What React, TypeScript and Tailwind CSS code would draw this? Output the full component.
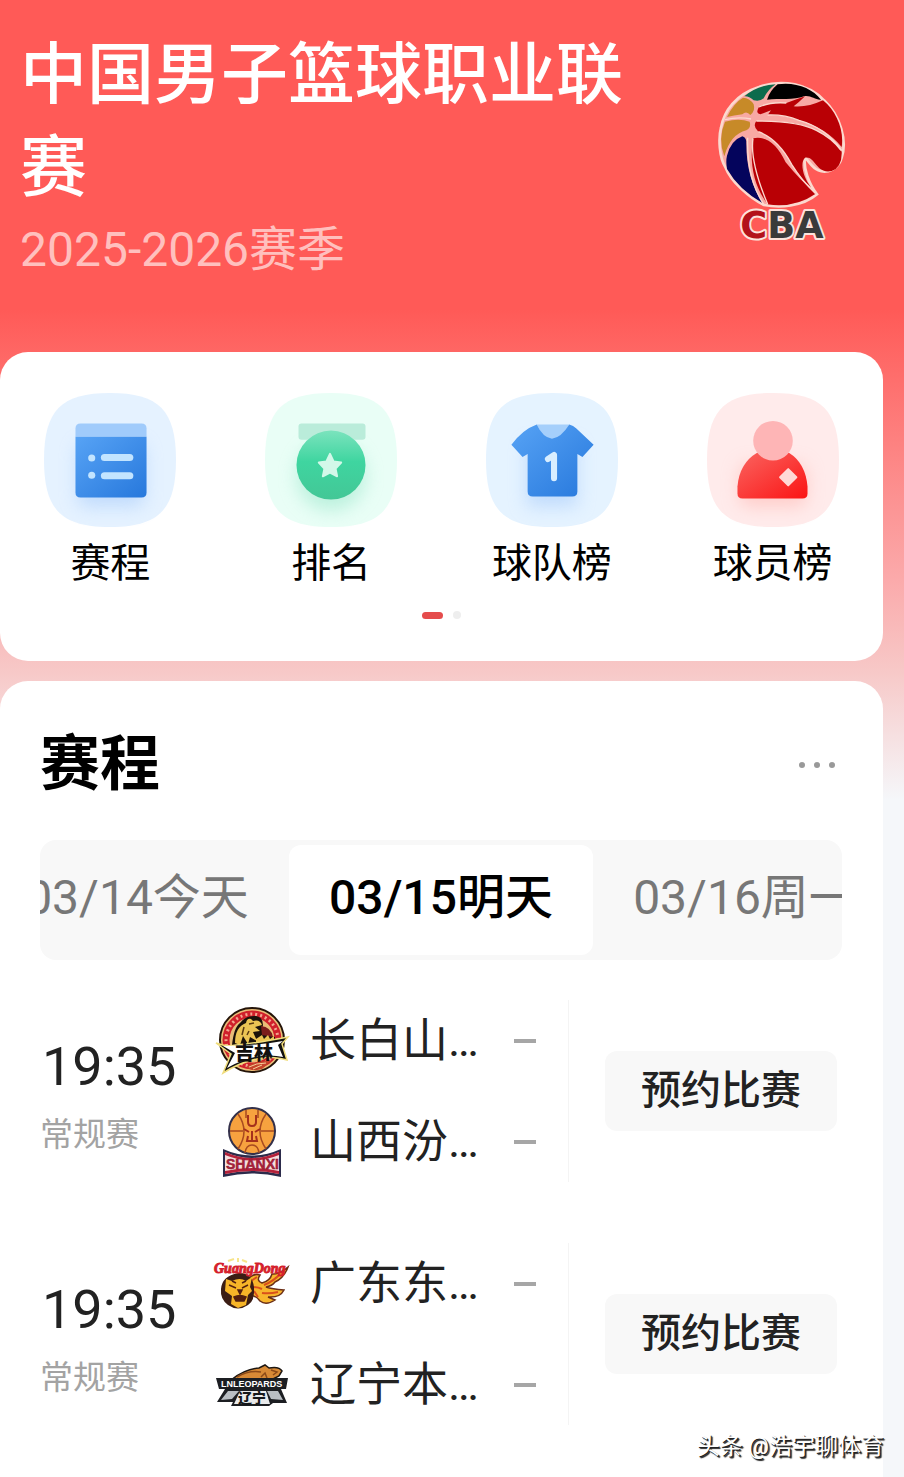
import React from "react";

type Game = { time: string; stage: string; teams: { name: string; logo: React.ReactNode }[] };

function CbaLogo() {
  return (
    <svg viewBox="54 54 390 486" className="h-[162px] w-[130px] overflow-visible" role="img" aria-label="CBA">
      <path
        d="M180 78C250 52 330 70 375 118C425 165 445 240 428 290C420 322 385 340 358 328C338 320 330 300 318 290C312 320 330 370 354 400C310 438 240 440 195 432C150 410 95 360 80 320C60 290 58 230 66 200C75 150 110 100 180 78Z"
        fill="#f8a9a4"
        stroke="#fbd9cf"
        strokeWidth="8"
      />
      <path d="M136 106Q175 72 230 70Q208 84 194 112Q184 122 164 118Q148 104 136 106Z" fill="#0c6b4c" />
      <path d="M236 70C290 62 340 82 366 116C350 118 335 102 315 106C285 118 240 112 204 116Q212 90 236 70Z" fill="#000" />
      <path d="M84 168Q104 126 132 110Q152 110 164 130Q170 150 154 162Q142 148 130 160Q104 164 84 168Z" fill="#c78a28" />
      <path d="M78 182Q120 170 152 182Q158 198 142 208Q94 220 76 286Q56 232 78 182Z" fill="#c78a28" />
      <path d="M84 284Q96 238 130 226Q144 230 142 250Q142 350 190 426Q118 384 84 324Q80 300 84 284Z" fill="#04045c" />
      <path
        d="M180 138Q215 122 262 126Q290 116 318 106Q300 124 284 136Q325 140 372 118C412 150 436 208 428 258Q380 200 300 178Q255 160 206 162L216 148L184 160Q168 156 180 138Z"
        fill="#b90005"
      />
      <path
        d="M172 180Q300 180 352 208Q400 232 428 272Q430 318 398 330C350 340 350 284 318 290C302 304 312 350 336 378Q306 356 278 310Q238 234 178 212Q160 196 172 180Z"
        fill="#b90005"
      />
      <path d="M162 232Q220 220 260 304Q304 358 350 398Q286 442 206 430C160 368 152 300 162 232Z" fill="#b90005" />
      <path
        d="M180 138Q215 122 262 126M206 162Q255 160 300 178Q380 200 428 268M172 180Q300 180 352 208Q400 232 426 268M178 212Q238 234 278 310Q306 356 350 398M162 232Q152 300 206 430M146 230Q142 350 194 430M78 176Q120 166 156 174"
        fill="none"
        stroke="#fbd9cf"
        strokeWidth="4"
      />
      <text
        x="124"
        y="532"
        fontFamily="DejaVu Sans"
        fontWeight="700"
        fontSize="110"
        stroke="#fbe3dc"
        strokeWidth="12"
        strokeLinejoin="round"
        paintOrder="stroke"
        fill="#3a3a3a"
      >
        <tspan fill="#b3121a">C</tspan>BA
      </text>
    </svg>
  );
}

function ScheduleIcon() {
  return (
    <svg viewBox="0 0 130 132" className="h-[134px] w-[132px]" aria-hidden="true">
      <defs>
        <linearGradient id="sch" x1="0" y1="0" x2="1" y2="1">
          <stop offset="0" stopColor="#57a3f5" />
          <stop offset="1" stopColor="#2778dc" />
        </linearGradient>
        <filter id="soft" x="-50%" y="-50%" width="200%" height="200%">
          <feGaussianBlur stdDeviation="9" />
        </filter>
      </defs>
      <path d="M65 0C113 0 130 17 130 66S113 132 65 132S0 115 0 66S17 0 65 0Z" fill="#e5f2ff" />
      <rect x="33" y="50" width="66" height="62" rx="8" fill="#a9ccfb" opacity=".6" filter="url(#soft)" />
      <path d="M31 43V35Q31 30 36 30H96Q101 30 101 35V43Z" fill="#a0cbfb" />
      <path d="M31 43H101V98Q101 103 96 103H36Q31 103 31 98Z" fill="url(#sch)" />
      <g fill="#c2e4ff">
        <circle cx="47" cy="64" r="3.500" />
        <circle cx="47" cy="81" r="3.500" />
        <rect x="56" y="60" width="32" height="7" rx="3.500" />
        <rect x="56" y="78" width="32" height="7" rx="3.500" />
      </g>
    </svg>
  );
}

function RankIcon() {
  return (
    <svg viewBox="0 0 130 132" className="h-[134px] w-[132px]" aria-hidden="true">
      <defs>
        <linearGradient id="rank" x1="0" y1="0" x2="0" y2="1">
          <stop offset="0" stopColor="#7be3bd" />
          <stop offset=".45" stopColor="#3fd5a0" />
          <stop offset="1" stopColor="#43c796" />
        </linearGradient>
      </defs>
      <path d="M65 0C113 0 130 17 130 66S113 132 65 132S0 115 0 66S17 0 65 0Z" fill="#e9fef6" />
      <circle cx="65" cy="82" r="34" fill="#9fe8cd" opacity=".6" filter="url(#soft)" />
      <rect x="33" y="30" width="66" height="16" rx="3" fill="#baecda" />
      <circle cx="65" cy="71" r="34" fill="url(#rank)" />
      <path
        d="M64 60L67.500 67.500L75 68.500L69.500 74.500L71 82L64 78.500L57 82L58.500 74.500L53 68.500L60.500 67.500Z"
        fill="#d3f8e9"
        stroke="#d3f8e9"
        strokeWidth="2"
        strokeLinejoin="round"
      />
    </svg>
  );
}

function TeamIcon() {
  return (
    <svg viewBox="0 0 130 132" className="h-[134px] w-[132px]" aria-hidden="true">
      <path d="M65 0C113 0 130 17 130 66S113 132 65 132S0 115 0 66S17 0 65 0Z" fill="#e5f3ff" />
      <path d="M40 50H90V112H40Z" fill="#a9ccfb" opacity=".6" filter="url(#soft)" />
      <path d="M50 31H82L72 48H59Z" fill="#a5cffb" />
      <path
        d="M50 31Q56 44 65 45Q74 44 82 31Q86 32 89 35L106 51L95 63L90 60V97Q90 102 85 102H46Q41 102 41 97V60L36 63L25 51Q36 36 50 31Z"
        fill="url(#sch)"
      />
      <path d="M61 65L67 61V84" fill="none" stroke="#d9eeff" strokeWidth="6" strokeLinecap="round" strokeLinejoin="round" />
    </svg>
  );
}

function PlayerIcon() {
  return (
    <svg viewBox="0 0 130 132" className="h-[134px] w-[132px]" aria-hidden="true">
      <defs>
        <linearGradient id="ply" x1="0" y1="0" x2="1" y2="1">
          <stop offset="0" stopColor="#fa6460" />
          <stop offset="1" stopColor="#fb1414" />
        </linearGradient>
      </defs>
      <path d="M65 0C113 0 130 17 130 66S113 132 65 132S0 115 0 66S17 0 65 0Z" fill="#ffebeb" />
      <rect x="32" y="70" width="66" height="42" rx="8" fill="#ffb9b4" opacity=".6" filter="url(#soft)" />
      <path d="M49 59H81Q97 69 99 92V99Q99 104 94 104H35Q30 104 30 99V92Q32 69 49 59Z" fill="url(#ply)" />
      <circle cx="65" cy="47" r="19.500" fill="#feb5b6" />
      <path d="M80 75L88 83L80 91L72 83Z" fill="#ffd9d6" stroke="#ffd9d6" strokeWidth="2" strokeLinejoin="round" />
    </svg>
  );
}

function JilinLogo() {
  return (
    <svg viewBox="0 0 72 68" className="h-[68px] w-[72px] overflow-visible" role="img" aria-label="吉林">
      <circle cx="36" cy="33" r="32" fill="#e9bd78" stroke="#241409" strokeWidth="2" />
      <circle cx="36" cy="33" r="26" fill="none" stroke="#d0202b" strokeWidth="7" />
      <circle cx="36" cy="33" r="26" fill="none" stroke="#f3a58d" strokeWidth="3" strokeDasharray="2 3" />
      <path d="M16 38Q18 20 24 16Q30 8 40 9Q47 10 47 18L46 22L52 28L59 30V38Z" fill="#1b120a" />
      <path d="M19 36Q19 20 30 16Q31 11 35 12L37 14Q44 12 46 18L39 20L44 24L37 25L41 34L34 30L32 37L27 29L24 38Z" fill="#ecc554" />
      <path d="M33 17L38 16M28 20L26 28M33 24L31 28" stroke="#5a3a10" strokeWidth="1.500" />
      <path d="M45 19Q55 20 57 30L46 28Z" fill="#7b1c1b" />
      <path d="M40 32L46 28L48 32L52 28L54 32L58 29L58 35H40Z" fill="#ecc554" />
      <path d="M0 36Q10 40 20 38Q42 36 72 30L66 37L71 53Q54 49 46 51Q26 54 7 66L15 47Z" fill="#12110f" stroke="#f0dd7c" strokeWidth="1.500" />
      <path d="M7 39Q40 39 67 34L62 38L67 50Q42 44 11 61L19 46Z" fill="#fff" />
      <text x="19" y="53" fontFamily="Noto Sans CJK SC" fontWeight="900" fontSize="19" fill="#12110f">吉林</text>
      <path d="M30 60Q40 53 55 54L46 62Q36 65 30 60Z" fill="#c4442b" />
      <path d="M33 60Q40 56 50 56M37 62L46 58" stroke="#f6cf9a" strokeWidth="1" fill="none" />
    </svg>
  );
}

function ShanxiLogo() {
  return (
    <svg viewBox="0 0 72 70" className="h-[70px] w-[72px] overflow-visible" role="img" aria-label="SHANXI">
      <circle cx="36" cy="24" r="23" fill="#f7a23f" stroke="#33304a" strokeWidth="2" />
      <g fill="none" stroke="#a84b20" strokeWidth="1.500">
        <path d="M14 24H27M45 24H58M22 7Q34 24 22 42M50 7Q38 24 50 42M30 3V11M42 3V11M29 46Q30 38 36 38Q42 38 43 46" />
      </g>
      <path
        d="M32 8V15Q32 19 36 19Q40 19 40 15V8M28 22L33 25M44 22L39 25M36 24V34M32 29L31 34H41L40 29"
        stroke="#a5301c"
        strokeWidth="2"
        fill="none"
      />
      <path d="M7 42Q36 55 65 42V70Q36 63 7 70Z" fill="#2c2b4b" />
      <path d="M9 45Q36 57 63 45V67Q36 61 9 67Z" fill="#f6dede" />
      <path d="M9 45Q36 57 63 45V48Q36 59 9 48ZM9 64Q36 58 63 64V67Q36 61 9 67Z" fill="#b4213a" />
      <text x="10" y="62" fontFamily="Liberation Sans" fontWeight="700" fontSize="14" fill="#b4213a" stroke="#7f1c33" strokeWidth=".5">SHANXI</text>
    </svg>
  );
}

function GuangdongLogo() {
  return (
    <svg viewBox="0 0 76 54" className="h-[54px] w-[76px] overflow-visible" role="img" aria-label="GuangDong">
      <path d="M14 4L20 2M24 1V5M28 3L33 5" stroke="#f7e48a" strokeWidth="2" fill="none" />
      <path
        d="M32 24Q38 16 46 18Q42 24 48 26Q56 24 58 17Q64 18 74 10Q70 21 61 25Q58 29 52 30Q58 32 70 33Q66 41 54 40L61 43Q52 49 46 44Q42 38 34 38Z"
        fill="#f8b52c"
        stroke="#6b2f17"
        strokeWidth="1.500"
      />
      <path d="M37 24L43 20M38 30Q44 30 48 32M50 28Q60 24 66 17M48 36Q56 37 64 35M40 34L44 40" stroke="#d9501b" strokeWidth="2" fill="none" />
      <path d="M7 32Q8 19 24 16Q38 15 40 30Q41 44 34 48Q24 55 14 48Q6 42 7 32Z" fill="#3b1d14" />
      <path d="M12 22L18 24Q26 20 32 24L38 20L36 30L38 34L34 38L32 48L24 51L17 47L18 39L11 34Z" fill="#f7b528" />
      <path d="M15 28L22 31M34 28L28 31M24 33H28L26 37ZM20 40Q26 37 32 40L30 44H22ZM18 24L22 26M32 24L28 26" fill="#54200f" stroke="#54200f" strokeWidth="1.500" />
      <text x="0" y="16" fontFamily="Liberation Serif" fontStyle="italic" fontWeight="700" fontSize="14" fill="#d51f2c" stroke="#d51f2c" strokeWidth="1">GuangDong</text>
    </svg>
  );
}

function LiaoningLogo() {
  return (
    <svg viewBox="0 0 74 42" className="h-[42px] w-[74px] overflow-visible" role="img" aria-label="LN LEOPARDS 辽宁">
      <path d="M16 16Q30 5 44 4L50 1L54 4Q64 2 67 7L64 12L58 15H44Z" fill="#d88a36" stroke="#1d1712" strokeWidth="1.500" />
      <path d="M22 13Q34 6 46 8M56 6L62 8L58 11M46 13L50 9L52 14" stroke="#8c4a18" strokeWidth="1.500" fill="none" />
      <path d="M1 14H73L71 25H66L72 39H58L54 42H16L18 38H2L10 25H4Z" fill="#1c1e22" />
      <path d="M13 27L6 36L17 35L24 27ZM52 27L56 35L68 36L63 27Z" fill="#b9bec3" />
      <path d="M25 27H51L55 40H19Z" fill="#e9eaeb" />
      <text x="6" y="23" fontFamily="Liberation Sans" fontWeight="700" fontSize="9" fill="#fff">LNLEOPARDS</text>
      <text x="23" y="39" fontFamily="Noto Sans CJK SC" fontWeight="900" fontSize="14" fill="#15171a">辽宁</text>
    </svg>
  );
}

const shortcuts = [
  { label: "赛程", icon: <ScheduleIcon /> },
  { label: "排名", icon: <RankIcon /> },
  { label: "球队榜", icon: <TeamIcon /> },
  { label: "球员榜", icon: <PlayerIcon /> },
];

const games: Game[] = [
  {
    time: "19:35",
    stage: "常规赛",
    teams: [
      { name: "长白山…", logo: <JilinLogo /> },
      { name: "山西汾…", logo: <ShanxiLogo /> },
    ],
  },
  {
    time: "19:35",
    stage: "常规赛",
    teams: [
      { name: "广东东…", logo: <GuangdongLogo /> },
      { name: "辽宁本…", logo: <LiaoningLogo /> },
    ],
  },
];

function GameRow({ game }: { game: Game }) {
  return (
    <li className="flex h-[182px] items-center">
      <div className="flex w-[174px] shrink-0 flex-col gap-[14px] pt-[14px]">
        <time className="pl-[2px] text-[54px] leading-[60px] text-[#222]">{game.time}</time>
        <span className="text-[33px] leading-[48px] text-[#a3a3a3]">{game.stage}</span>
      </div>
      <ul className="flex min-w-0 flex-1 flex-col">
        {game.teams.map((team) => (
          <li key={team.name} className="flex h-[101px] items-center">
            <span className="flex w-[76px] shrink-0 justify-center">{team.logo}</span>
            <span className="ml-5 flex-1 whitespace-nowrap pb-[2px] text-[46px] leading-[60px] text-[#222]">{team.name}</span>
            <span className="mr-8 h-1 w-[22px] bg-[#a6a6a6]" />
          </li>
        ))}
      </ul>
      <div className="flex h-full shrink-0 items-center border-l border-[#f4f4f4] pl-9 pr-[5px]">
        <button className="h-20 w-[232px] rounded-xl bg-[#f8f8f8] text-[40px] font-medium leading-[80px] text-[#222]">预约比赛</button>
      </div>
    </li>
  );
}

export default function App() {
  return (
    <div className="relative flex min-h-screen flex-col bg-[#f5f7fa] bg-[linear-gradient(180deg,#ff5a57_0px,#ff5a57_310px,#fbaaab_580px,#f7c8c7_670px,#f5f7fa_800px)] pr-[21px] font-[Roboto,'Noto_Sans_CJK_SC',sans-serif]">
      <header className="flex h-[352px] items-start justify-between pl-[20px] pr-[36px] pt-[29px]">
        <div className="max-w-[620px]">
          <h1 className="text-[67px] font-medium leading-[93px] text-white">中国男子篮球职业联赛</h1>
          <p className="mt-1 text-[48px] leading-[62px] text-[#ffc0be]">2025-2026赛季</p>
        </div>
        <div className="mt-[50px]">
          <CbaLogo />
        </div>
      </header>

      <main className="flex flex-1 flex-col gap-5">
        <nav className="flex h-[309px] flex-col rounded-[28px] bg-white pt-[41px]">
          <div className="grid grid-cols-4">
            {shortcuts.map((item) => (
              <a key={item.label} href="#" className="flex flex-col items-center gap-[7px] text-[40px] leading-[60px] text-black">
                {item.icon}
                {item.label}
              </a>
            ))}
          </div>
          <div className="mt-[17px] flex items-center justify-center gap-[10px]">
            <span className="h-[7px] w-[21px] rounded-full bg-[#e54c4c]" />
            <span className="size-2 rounded-full bg-[#eee]" />
          </div>
        </nav>

        <section className="flex-1 rounded-t-[28px] bg-white pl-[40px] pr-[41px] pt-[45px]">
          <div className="flex h-[78px] items-center justify-between">
            <h2 className="text-[60px] font-bold leading-[78px] text-black">赛程</h2>
            <button aria-label="更多" className="mr-[7px] flex gap-[9px]">
              <span className="size-[6px] rounded-full bg-[#999]" />
              <span className="size-[6px] rounded-full bg-[#999]" />
              <span className="size-[6px] rounded-full bg-[#999]" />
            </button>
          </div>

          <div className="mt-9 flex h-[120px] items-center justify-center overflow-hidden rounded-2xl bg-[#f8f8f8] text-[48px] leading-[106px] text-[#777]">
            <button className="h-[110px] w-[304px] shrink-0 whitespace-nowrap pb-1">03/14今天</button>
            <button className="h-[110px] w-[304px] shrink-0 whitespace-nowrap rounded-xl bg-white pb-1 font-medium text-black">
              03/15明天
            </button>
            <button className="h-[110px] w-[304px] shrink-0 whitespace-nowrap pb-1">03/16周一</button>
          </div>

          <ul className="flex flex-col gap-[61px] pb-[52px] pt-[40px]">
            {games.map((game, i) => (
              <GameRow key={i} game={game} />
            ))}
          </ul>
        </section>
      </main>

      <p className="absolute bottom-3 right-5 text-[23px] leading-[36px] text-white [text-shadow:1px_1px_0_#222,2px_2px_1px_#222]">
        头条 @浩宇聊体育
      </p>
    </div>
  );
}
